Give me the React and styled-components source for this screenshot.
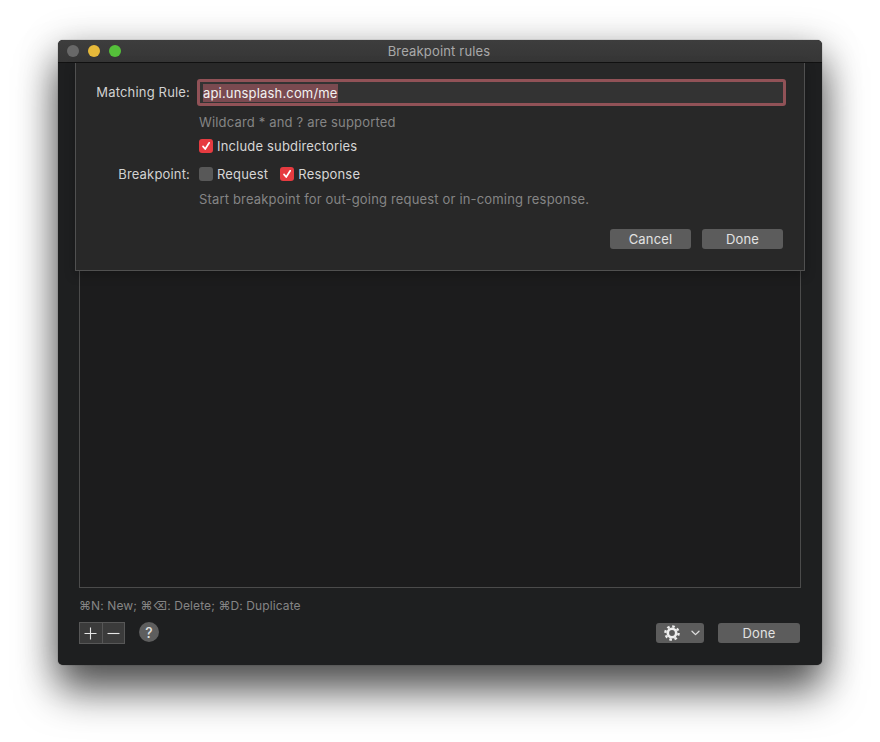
import React from "react";
import styled, { createGlobalStyle } from "styled-components";

const GlobalStyle = createGlobalStyle`
  html, body {
    margin: 0;
    padding: 0;
    background: #fff;
  }
  body {
    font-family: Inter, "Liberation Sans", sans-serif;
    font-size: 13px;
    letter-spacing: 0.17px;
    overflow: hidden;
  }
`;

const Page = styled.div`
  width: 880px;
  height: 742px;
  padding: 40px 58px 0;
  box-sizing: border-box;
`;

const Window = styled.div`
  position: relative;
  width: 764px;
  height: 625px;
  display: flex;
  flex-direction: column;
  background: #1e1f20;
  border-radius: 5px;
  box-shadow: 0 0 1px rgba(0, 0, 0, 0.7), 0 26px 40px rgba(0, 0, 0, 0.62), 0 6px 38px rgba(0, 0, 0, 0.25);
`;

const TitleBar = styled.div`
  position: relative;
  height: 23px;
  flex: none;
  display: flex;
  align-items: center;
  justify-content: center;
  background: linear-gradient(#3d3d3d, #363636);
  border-bottom: 1px solid #111;
  border-radius: 5px 5px 0 0;
  box-sizing: border-box;
  color: #a9a9a9;
  font-size: 13px;
  padding-right: 2px;
`;

const Lights = styled.div`
  position: absolute;
  left: 9px;
  top: 5px;
  display: flex;
  gap: 9px;
`;

const Light = styled.span`
  width: 12px;
  height: 12px;
  border-radius: 50%;
  background: ${(p) => p.$color};
`;

const Sheet = styled.div`
  position: absolute;
  left: 17px;
  top: 23px;
  width: 730px;
  height: 208px;
  box-sizing: border-box;
  padding: 16px 22px 0 0;
  background: #282828;
  border: 1px solid #505050;
  border-top: none;
  box-shadow: 0 4px 10px rgba(0, 0, 0, 0.25);
  display: flex;
  flex-direction: column;
`;

const FormGrid = styled.div`
  display: grid;
  grid-template-columns: 114px 1fr;
  column-gap: 7px;
`;

const Label = styled.div`
  color: #d2d2d2;
  text-align: right;
  line-height: ${(p) => p.$height}px;
  margin-top: ${(p) => p.$top || 0}px;
`;

const InputRing = styled.div`
  height: 27px;
  margin-right: -4px;
  box-sizing: border-box;
  border: 3px solid #915257;
  border-radius: 3px;
  background: #333;
  display: flex;
  align-items: center;
  padding-left: 3px;
`;

const Selected = styled.span`
  background: #7a4a50;
  color: #f2f2f2;
  line-height: 18px;
`;

const Hint = styled.div`
  color: #858585;
  line-height: 16px;
  margin: ${(p) => p.$margin};
  padding-left: 2px;
`;

const CheckRow = styled.div`
  display: flex;
  align-items: center;
  gap: 12px;
  height: 16px;
  padding-left: 2px;
  margin: ${(p) => p.$margin || 0};
`;

const CheckItem = styled.div`
  display: flex;
  align-items: center;
  gap: 4px;
  color: #d6d6d6;
`;

const Box = styled.span`
  width: 14px;
  height: 14px;
  border-radius: 3px;
  background: ${(p) => (p.$on ? "#e63b40" : "#585858")};
  display: flex;
  align-items: center;
  justify-content: center;
  svg {
    width: 10px;
    height: 10px;
  }
`;

const SheetActions = styled.div`
  display: flex;
  justify-content: flex-end;
  gap: 11px;
  margin: 22px -1px 0 0;
`;

const Button = styled.div`
  width: ${(p) => p.$width}px;
  height: 20px;
  border-radius: 3px;
  background: #5c5c5c;
  color: #e2e2e2;
  display: flex;
  align-items: center;
  justify-content: center;
  box-sizing: border-box;
`;

const Body = styled.div`
  flex: 1;
  display: flex;
  flex-direction: column;
  padding: 20px 21px 0;
`;

const List = styled.div`
  height: 505px;
  border: 1px solid #4b4b4b;
  background: #1c1c1d;
  box-sizing: border-box;
`;

const Shortcuts = styled.div`
  color: #858585;
  font-size: 12px;
  letter-spacing: 0.1px;
  line-height: 16px;
  margin-top: 10px;
`;

const Footer = styled.div`
  display: flex;
  align-items: flex-start;
  margin-top: 8px;
  height: 22px;
`;

const Segments = styled.div`
  display: flex;
`;

const Segment = styled.div`
  width: 23.5px;
  height: 22px;
  box-sizing: border-box;
  background: #3b3b3b;
  border: 1px solid #575757;
  margin-left: ${(p) => (p.$joined ? "-1px" : 0)};
  display: flex;
  align-items: center;
  justify-content: center;
  svg {
    width: 13px;
    height: 13px;
  }
`;

const Help = styled.div`
  width: 20px;
  height: 20px;
  margin-left: 14px;
  border-radius: 50%;
  background: #5e5e5e;
  color: #e0e0e0;
  font-size: 14px;
  font-weight: 500;
  display: flex;
  align-items: center;
  justify-content: center;
`;

const FooterRight = styled.div`
  margin: 1px 1px 0 auto;
  display: flex;
  align-items: center;
  gap: 14px;
`;

const GearButton = styled(Button)`
  justify-content: flex-start;
  padding-left: 8px;
  gap: 11px;
  svg:first-child {
    width: 16px;
    height: 16px;
  }
  svg:last-child {
    width: 9px;
    height: 6px;
  }
`;

const Check = () => (
  <svg viewBox="0 0 10 10" fill="none" stroke="#fff" strokeWidth="1.7" strokeLinecap="round" strokeLinejoin="round">
    <path d="M2 5.4 4.2 8 8.2 1.8" />
  </svg>
);

const Gear = () => (
  <svg viewBox="0 0 16 16">
    <circle cx="8" cy="8" r="4.2" fill="none" stroke="#eee" strokeWidth="2.6" />
    <circle cx="8" cy="8" r="6.6" fill="none" stroke="#eee" strokeWidth="2.4" strokeDasharray="2.6 2.58" />
  </svg>
);

const Chevron = () => (
  <svg viewBox="0 0 9 6" fill="none" stroke="#ddd" strokeWidth="1.3" strokeLinecap="round" strokeLinejoin="round">
    <path d="M1 1.2 4.5 4.6 8 1.2" />
  </svg>
);

const App = () => (
  <Page>
    <GlobalStyle />
    <Window>
      <TitleBar>
        <Lights>
          <Light $color="#686868" />
          <Light $color="#e6b93a" />
          <Light $color="#55c13a" />
        </Lights>
        Breakpoint rules
      </TitleBar>

      <Body>
        <List />
        <Shortcuts>⌘N: New; ⌘⌫: Delete; ⌘D: Duplicate</Shortcuts>
        <Footer>
          <Segments>
            <Segment>
              <svg viewBox="0 0 13 13" stroke="#e6e6e6" strokeWidth="1.1">
                <path d="M6.5 0.5v12M0.5 6.5h12" />
              </svg>
            </Segment>
            <Segment $joined>
              <svg viewBox="0 0 13 13" stroke="#e6e6e6" strokeWidth="1.1">
                <path d="M0.5 6.5h12" />
              </svg>
            </Segment>
          </Segments>
          <Help>?</Help>
          <FooterRight>
            <GearButton $width={48}>
              <Gear />
              <Chevron />
            </GearButton>
            <Button $width={82}>Done</Button>
          </FooterRight>
        </Footer>
      </Body>

      <Sheet>
        <FormGrid>
          <Label $height={27}>Matching Rule:</Label>
          <InputRing>
            <Selected>api.unsplash.com/me</Selected>
          </InputRing>
          <span />
          <Hint $margin="8px 0 0">Wildcard * and ? are supported</Hint>
          <span />
          <CheckRow $margin="8px 0 0">
            <CheckItem>
              <Box $on>
                <Check />
              </Box>
              Include subdirectories
            </CheckItem>
          </CheckRow>
          <Label $height={16} $top={12}>
            Breakpoint:
          </Label>
          <CheckRow $margin="12px 0 0">
            <CheckItem>
              <Box />
              Request
            </CheckItem>
            <CheckItem>
              <Box $on>
                <Check />
              </Box>
              Response
            </CheckItem>
          </CheckRow>
          <span />
          <Hint $margin="9px 0 0">Start breakpoint for out-going request or in-coming response.</Hint>
        </FormGrid>
        <SheetActions>
          <Button $width={81}>Cancel</Button>
          <Button $width={81}>Done</Button>
        </SheetActions>
      </Sheet>
    </Window>
  </Page>
);

export default App;
